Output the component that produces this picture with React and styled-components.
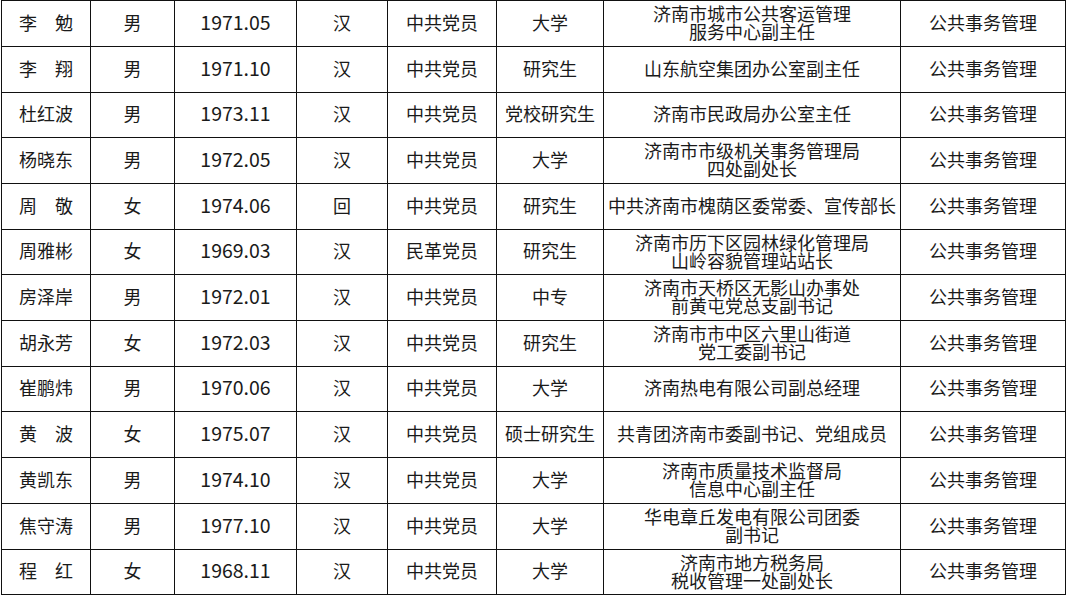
import React from 'react';
import styled, { createGlobalStyle } from 'styled-components';

const GlobalStyle = createGlobalStyle`
    html, body {
        margin: 0;
        padding: 0;
        background: #fff;
    }
    body {
        font-family: "Noto Sans CJK SC", "Noto Sans", sans-serif;
        color: #1a1a1a;
    }
`;

const columns = [89, 84, 122, 91, 109, 107, 297, 165];
const rowHeights = [46, 46, 45, 46, 46, 45, 46, 46, 45, 46, 46, 46, 45];

const people = [
    ['李　勉', '男', '1971.05', '汉', '中共党员', '大学', ['济南市城市公共客运管理', '服务中心副主任']],
    ['李　翔', '男', '1971.10', '汉', '中共党员', '研究生', ['山东航空集团办公室副主任']],
    ['杜红波', '男', '1973.11', '汉', '中共党员', '党校研究生', ['济南市民政局办公室主任']],
    ['杨晓东', '男', '1972.05', '汉', '中共党员', '大学', ['济南市市级机关事务管理局', '四处副处长']],
    ['周　敬', '女', '1974.06', '回', '中共党员', '研究生', ['中共济南市槐荫区委常委、宣传部长']],
    ['周雅彬', '女', '1969.03', '汉', '民革党员', '研究生', ['济南市历下区园林绿化管理局', '山岭容貌管理站站长']],
    ['房泽岸', '男', '1972.01', '汉', '中共党员', '中专', ['济南市天桥区无影山办事处', '前黄屯党总支副书记']],
    ['胡永芳', '女', '1972.03', '汉', '中共党员', '研究生', ['济南市市中区六里山街道', '党工委副书记']],
    ['崔鹏炜', '男', '1970.06', '汉', '中共党员', '大学', ['济南热电有限公司副总经理']],
    ['黄　波', '女', '1975.07', '汉', '中共党员', '硕士研究生', ['共青团济南市委副书记、党组成员']],
    ['黄凯东', '男', '1974.10', '汉', '中共党员', '大学', ['济南市质量技术监督局', '信息中心副主任']],
    ['焦守涛', '男', '1977.10', '汉', '中共党员', '大学', ['华电章丘发电有限公司团委', '副书记']],
    ['程　红', '女', '1968.11', '汉', '中共党员', '大学', ['济南市地方税务局', '税收管理一处副处长']],
];

const App = () => {
    return (
        <>
            <GlobalStyle />
            <Sheet>
                {people.map((row, i) => {
                    const [name, sex, born, nation, party, edu, post] = row;
                    return (
                        <React.Fragment key={i}>
                            <Cell>{name}</Cell>
                            <Cell>{sex}</Cell>
                            <Cell><Num>{born}</Num></Cell>
                            <Cell>{nation}</Cell>
                            <Cell>{party}</Cell>
                            <Cell>{edu}</Cell>
                            <Cell $multi={post.length > 1}>
                                {post.map((line) => <Line key={line}>{line}</Line>)}
                            </Cell>
                            <Cell>公共事务管理</Cell>
                        </React.Fragment>
                    );
                })}
            </Sheet>
        </>
    );
};

export default App;

const Sheet = styled.div`
    display: grid;
    grid-template-columns: ${columns.map((w) => `${w}px`).join(' ')};
    grid-template-rows: ${rowHeights.map((h) => `${h}px`).join(' ')};
    width: max-content;
    margin-left: 1px;
    border-top: 1px solid #111;
    border-left: 1px solid #111;
`;

const Cell = styled.div`
    box-sizing: border-box;
    display: flex;
    flex-direction: column;
    align-items: center;
    justify-content: center;
    padding-bottom: ${({ $multi }) => ($multi ? '3px' : '4px')};
    border-right: 1px solid #111;
    border-bottom: 1px solid #111;
    font-size: 18px;
    line-height: ${({ $multi }) => ($multi ? '18px' : '24px')};
    white-space: nowrap;
    text-align: center;
`;

const Line = styled.span`
    display: block;
`;

const Num = styled.span`
    font-size: 19.5px;
`;
